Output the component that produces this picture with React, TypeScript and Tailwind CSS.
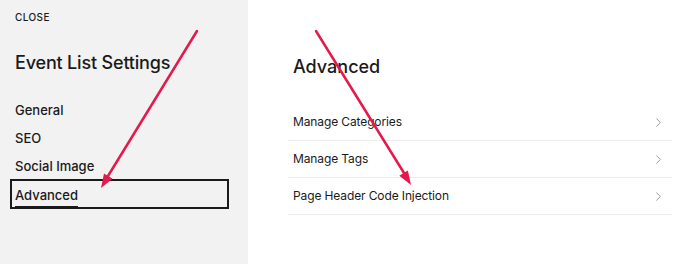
import { ChevronRight } from 'lucide-react';

const NAV = ['General', 'SEO', 'Social Image', 'Advanced'];
const ROWS = ['Manage Categories', 'Manage Tags', 'Page Header Code Injection'];

export default function App() {
  return (
    <div className="relative flex w-[700px] h-[264px] bg-white text-[#1a1a1a] font-['Inter','Liberation_Sans',sans-serif] overflow-hidden">
      {/* Left — settings menu */}
      <aside className="w-[248px] shrink-0 bg-[#f2f2f2] pt-[10px] pl-[15px]">
        <div className="text-[10px] leading-[14px] font-medium tracking-[0.04em]">CLOSE</div>
        <h1 className="mt-[27px] text-[18px] leading-[24px] font-medium tracking-[-0.01em]">Event List Settings</h1>
        <nav className="mt-[21px] -ml-[5px] w-[219px]">
          {NAV.map((item) => (
            <div
              key={item}
              className={
                item === 'Advanced'
                  ? 'h-[30px] -mt-px flex items-center pl-[3px] border-2 border-[#1a1a1a]'
                  : 'h-[28px] flex items-center pl-[5px]'
              }
            >
              <span
                className={
                  item === 'Advanced'
                    ? 'text-[13px] leading-[16px] font-medium border-b-2 border-[#1a1a1a] pb-[3px] mt-[7px]'
                    : 'text-[13px] leading-[16px] font-medium'
                }
              >
                {item}
              </span>
            </div>
          ))}
        </nav>
      </aside>

      {/* Right — advanced panel */}
      <main className="flex-1 pt-[55px] pl-[40px]">
        <h2 className="pl-[5px] text-[18px] leading-[24px] font-medium">Advanced</h2>
        <div className="mt-[25px] w-[384px]">
          {ROWS.map((row) => (
            <div key={row} className="h-[37px] flex items-center justify-between pl-[5px] pr-[6px] border-b border-[#ececec]">
              <span className="text-[12px] tracking-[-0.01em]">{row}</span>
              <ChevronRight size={15} strokeWidth={1.4} className="text-[#8c8c8c]" />
            </div>
          ))}
        </div>
      </main>

      {/* Annotation arrows */}
      <svg className="absolute inset-0 pointer-events-none" width="700" height="264" viewBox="0 0 700 264">
        <g stroke="#e5194c" strokeWidth="2.5" strokeLinecap="round">
          <line x1="197" y1="31" x2="108" y2="176" />
          <line x1="316" y1="31" x2="404" y2="173" />
        </g>
        <g fill="#e5194c">
          <polygon points="101,188 112.6,178.7 104,173.5" />
          <polygon points="411,185 407.9,170.5 399.3,175.7" />
        </g>
      </svg>
    </div>
  );
}
